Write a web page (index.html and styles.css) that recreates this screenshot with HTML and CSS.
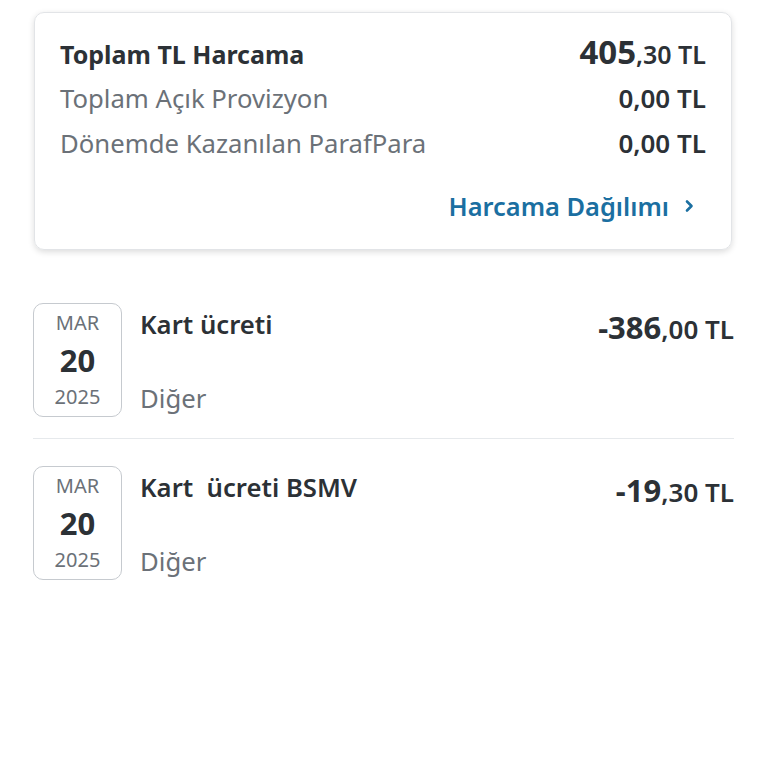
FILE: index.html
```html
<!DOCTYPE html>
<html lang="tr">
<head>
    <meta charset="UTF-8">
    <meta name="viewport" content="width=device-width, initial-scale=1.0">
    <title>Harcamalar</title>
    <link rel="stylesheet" href="styles.css">
</head>
<body>
    <div class="summary">
        <div class="summary-row summary-total">
            <span class="summary-label">Toplam TL Harcama</span>
            <span class="summary-amount"><b>405</b>,30 TL</span>
        </div>
        <div class="summary-row">
            <span class="summary-label">Toplam Açık Provizyon</span>
            <span class="summary-amount">0,00 TL</span>
        </div>
        <div class="summary-row">
            <span class="summary-label">Dönemde Kazanılan ParafPara</span>
            <span class="summary-amount">0,00 TL</span>
        </div>
        <a href="#" class="summary-link">
            Harcama Dağılımı
            <svg class="chevron" width="10" height="14" viewBox="0 0 10 14">
                <path d="M3 2.5 L7.5 7 L3 11.5" fill="none" stroke="currentColor" stroke-width="2.6" stroke-linecap="round" stroke-linejoin="round"/>
            </svg>
        </a>
    </div>

    <ul class="transactions">
        <li class="transaction">
            <div class="date-box">
                <span class="date-month">MAR</span>
                <span class="date-day">20</span>
                <span class="date-year">2025</span>
            </div>
            <div class="tx-info">
                <span class="tx-title">Kart ücreti</span>
                <span class="tx-category">Diğer</span>
            </div>
            <div class="tx-amount"><b>-386</b>,00 TL</div>
        </li>
        <li class="transaction">
            <div class="date-box">
                <span class="date-month">MAR</span>
                <span class="date-day">20</span>
                <span class="date-year">2025</span>
            </div>
            <div class="tx-info">
                <span class="tx-title">Kart&nbsp; ücreti BSMV</span>
                <span class="tx-category">Diğer</span>
            </div>
            <div class="tx-amount"><b>-19</b>,30 TL</div>
        </li>
    </ul>
</body>
</html>
```

FILE: styles.css
```css
:root {
    --text-dark: #2c3136;
    --text-gray: #6b7178;
    --link-color: #1b6fa1;
    --line-color: #e6e9ec;
    --box-border: #c6cacf;
}

* {
    margin: 0;
    padding: 0;
    box-sizing: border-box;
    font-family: "Noto Sans", "Open Sans", sans-serif;
}

body {
    background-color: white;
    color: var(--text-dark);
}

.summary {
    margin: 12px 36px 0 34px;
    padding: 17px 25px 21px 25px;
    border: 1px solid #e2e4e7;
    border-radius: 10px;
    box-shadow: 0 2px 6px rgba(0,0,0,0.14);
    display: flex;
    flex-direction: column;
}

.summary-row {
    display: flex;
    justify-content: space-between;
    align-items: baseline;
    line-height: 44px;
}

.summary-label {
    font-size: 25.7px;
    color: var(--text-gray);
}

.summary-total .summary-label {
    font-size: 25px;
    color: var(--text-dark);
    font-weight: 700;
}

.summary-amount {
    font-size: 26px;
    font-weight: 600;
    color: var(--text-dark);
}

.summary-total .summary-amount {
    font-size: 25px;
}

.summary-total .summary-amount b {
    font-size: 33px;
    font-weight: 700;
}

.summary-link {
    align-self: flex-end;
    margin: 18px 12px 0 0;
    line-height: 44px;
    font-size: 25.4px;
    font-weight: 600;
    color: var(--link-color);
    text-decoration: none;
    display: flex;
    align-items: center;
    gap: 15px;
}

.transactions {
    list-style: none;
    margin: 53px 34px 0 33px;
}

.transaction {
    display: flex;
    align-items: flex-start;
    padding: 27px 0 21px;
    border-bottom: 1px solid var(--line-color);
}

.transaction:first-child {
    padding-top: 0;
}

.transaction:last-child {
    border-bottom: none;
}

.date-box {
    width: 89px;
    height: 114px;
    border: 1px solid var(--box-border);
    border-radius: 10px;
    display: flex;
    flex-direction: column;
    align-items: center;
    padding-top: 6px;
    flex-shrink: 0;
}

.date-month,
.date-year {
    font-size: 20px;
    line-height: 26px;
    color: var(--text-gray);
}

.date-day {
    font-size: 31px;
    font-weight: 700;
    line-height: 38px;
    margin-top: 5px;
    color: var(--text-dark);
}

.date-year {
    margin-top: 5px;
}

.tx-info {
    flex-grow: 1;
    height: 114px;
    margin-left: 18px;
    padding: 7px 0 3px;
    display: flex;
    flex-direction: column;
    justify-content: space-between;
}

.tx-title {
    font-size: 25.7px;
    font-weight: 600;
    line-height: 30px;
    white-space: pre;
}

.tx-category {
    font-size: 25.7px;
    line-height: 30px;
    color: var(--text-gray);
}

.tx-amount {
    padding-top: 9px;
    line-height: 30px;
    font-size: 26px;
    font-weight: 600;
}

.tx-amount b {
    font-size: 31px;
    font-weight: 700;
}
```
